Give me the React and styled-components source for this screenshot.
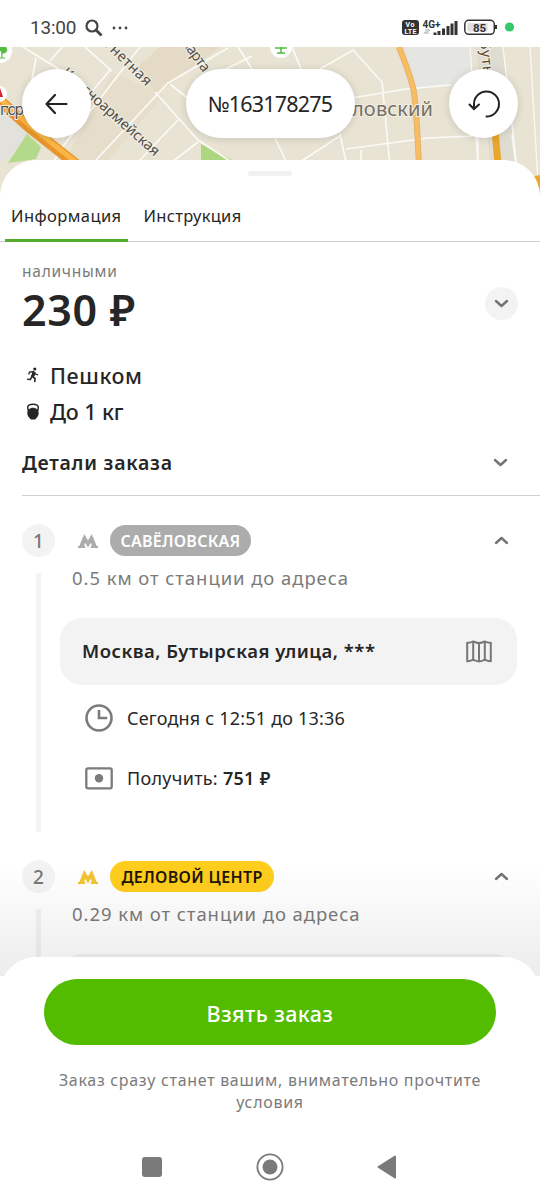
import React from "react";
import styled, { createGlobalStyle } from "styled-components";

const colors = {
  text: "#262626",
  gray: "#7b7b7b",
  light: "#f3f3f3",
  line: "#cfcfcf",
  green: "#53bc00",
  yellow: "#ffcd1c"
};

const GlobalStyle = createGlobalStyle`
  * {
    box-sizing: border-box;
  }
  body {
    margin: 0;
    background: #fff;
    color: ${colors.text};
    font-family: "Noto Sans", "Open Sans", sans-serif;
  }
  svg {
    display: block;
    flex: none;
  }
`;

const Screen = styled.div`
  width: 540px;
  height: 1200px;
  display: flex;
  flex-direction: column;
  overflow: hidden;
  background: #fff;
`;

const StatusBar = styled.div`
  height: 47px;
  flex: none;
  display: flex;
  align-items: center;
  justify-content: space-between;
  padding: 8px 25px 0 30px;
`;

const StatusGroup = styled.div`
  display: flex;
  align-items: center;
  gap: ${props => props.$gap}px;
`;

const Clock = styled.span`
  font-family: Roboto, sans-serif;
  font-size: 19px;
  line-height: 22px;
  letter-spacing: -0.2px;
  color: #444;
`;

const MapArea = styled.div`
  position: relative;
  height: 160px;
  flex: none;
`;

const MapCanvas = styled.svg`
  position: absolute;
  top: 0;
  left: 0;
`;

const MapControls = styled.div`
  position: relative;
  display: flex;
  justify-content: space-between;
  padding: 22px 22px 0;
`;

const RoundButton = styled.button`
  width: 69px;
  height: 69px;
  border: none;
  border-radius: 50%;
  padding: 0;
  background: #fff;
  box-shadow: 0 1px 8px rgba(0, 0, 0, 0.14);
  display: flex;
  align-items: center;
  justify-content: center;
`;

const OrderNumber = styled.div`
  width: 169px;
  height: 69px;
  border-radius: 35px;
  background: #fff;
  box-shadow: 0 1px 8px rgba(0, 0, 0, 0.14);
  line-height: 70px;
  text-align: center;
  white-space: nowrap;
  font-size: 21.5px;
  letter-spacing: -0.8px;
`;

const Sheet = styled.div`
  position: relative;
  height: 816px;
  flex: none;
  margin-top: -47px;
  padding-top: 11px;
  background: #fff;
  border-radius: 36px 36px 0 0;
  overflow: hidden;
`;

const Handle = styled.div`
  width: 44px;
  height: 5px;
  margin: 0 auto;
  border-radius: 3px;
  background: #f1f1f1;
`;

const Tabs = styled.div`
  display: flex;
  height: 52px;
  margin: 14px 0 1px;
  padding-left: 5px;
  gap: 10px;
  box-shadow: inset 0 -1px #d0d0d0;
`;

const Tab = styled.div`
  padding: 0 6px;
  line-height: 52px;
  font-size: 16.5px;
  letter-spacing: ${props => props.$spacing}px;
  box-shadow: ${props => (props.$active ? "inset 0 -3px #55ab2b" : "none")};
`;

const Summary = styled.div`
  display: flex;
  justify-content: space-between;
  align-items: center;
  padding: 18px 22px 0;
`;

const PayType = styled.div`
  line-height: 20px;
  font-size: 15.5px;
  letter-spacing: 0.75px;
  color: ${colors.gray};
`;

const Price = styled.div`
  margin-top: 4px;
  line-height: 50px;
  font-size: 43px;
  font-weight: 600;
  letter-spacing: 0.7px;
`;

const Toggle = styled.div`
  width: 33px;
  height: 33px;
  margin-top: 10px;
  border-radius: 50%;
  background: ${colors.light};
  display: flex;
  align-items: center;
  justify-content: center;
`;

const Traits = styled.div`
  padding: 22px 22px 0 26px;
`;

const Trait = styled.div`
  display: flex;
  align-items: center;
  gap: 10px;
  height: 36px;
  font-size: 21.5px;
  font-weight: 500;
  letter-spacing: ${props => props.$spacing}px;
`;

const Details = styled.div`
  display: flex;
  align-items: center;
  justify-content: space-between;
  height: 67px;
  margin-left: 22px;
  padding-right: 32px;
  border-bottom: 1px solid ${colors.line};
  font-size: 19.5px;
  font-weight: 600;
  letter-spacing: 0.75px;
`;

const Stop = styled.div`
  display: flex;
  height: 308px;
  margin-top: 28px;
  padding: 0 23px 0 22px;
`;

const Rail = styled.div`
  width: 33px;
  flex: none;
  display: flex;
  flex-direction: column;
  align-items: center;
  gap: 16px;
`;

const StopNumber = styled.div`
  width: 33px;
  height: 33px;
  flex: none;
  border-radius: 50%;
  background: ${colors.light};
  line-height: 34px;
  text-align: center;
  font-size: 19px;
  font-weight: 500;
  color: #777;
`;

const RailLine = styled.div`
  width: 5px;
  flex: 1;
  background: ${colors.light};
`;

const StopBody = styled.div`
  flex: 1;
  margin-left: 5px;
`;

const StopHead = styled.div`
  display: flex;
  align-items: center;
  height: 33px;
  padding: 0 8px 0 18px;
`;

const Station = styled.div`
  width: ${props => props.$width}px;
  height: 31px;
  margin: 0 auto 0 12px;
  border-radius: 16px;
  background: ${props => props.$bg};
  color: ${props => props.$fg};
  line-height: 32px;
  text-align: center;
  white-space: nowrap;
  font-size: 16px;
  font-weight: 600;
  letter-spacing: ${props => props.$spacing}px;
`;

const Distance = styled.div`
  margin: 9px 0 0 12px;
  line-height: 24px;
  font-size: 18.5px;
  letter-spacing: 0.93px;
  white-space: nowrap;
  color: ${colors.gray};
`;

const Address = styled.div`
  display: flex;
  align-items: center;
  justify-content: space-between;
  height: 67px;
  margin-top: 28px;
  padding: 0 25px 0 22px;
  border-radius: 22px;
  background: ${colors.light};
  font-size: 18.5px;
  font-weight: 600;
  letter-spacing: 0.5px;
  span {
    margin-top: -3px;
    white-space: nowrap;
  }
`;

const Facts = styled.div`
  padding: 3px 0 0 25px;
`;

const Fact = styled.div`
  display: flex;
  align-items: center;
  gap: 14px;
  height: 60px;
  font-size: 18px;
  letter-spacing: ${props => props.$spacing}px;
  white-space: nowrap;
  b {
    font-weight: 600;
  }
`;

const Fade = styled.div`
  position: absolute;
  left: 0;
  right: 0;
  bottom: 0;
  height: 112px;
  background: linear-gradient(rgba(0, 0, 0, 0), rgba(0, 0, 0, 0.075));
`;

const Footer = styled.div`
  position: relative;
  flex: 1;
  margin-top: -19px;
  padding: 22px 44px 0;
  border-radius: 36px 36px 0 0;
  background: #fff;
`;

const TakeButton = styled.button`
  display: block;
  width: 452px;
  height: 66px;
  border: none;
  border-radius: 33px;
  padding-top: 3px;
  background: ${colors.green};
  color: #fff;
  font-family: inherit;
  font-size: 21.5px;
  font-weight: 500;
  letter-spacing: 0.4px;
`;

const Hint = styled.div`
  margin: 24px -10px 0;
  line-height: 22px;
  text-align: center;
  font-size: 16px;
  letter-spacing: 0.7px;
  color: ${colors.gray};
`;

const SystemNav = styled.div`
  display: flex;
  align-items: center;
  justify-content: space-between;
  height: 28px;
  margin-top: 40px;
  padding: 0 99px 0 98px;
`;

const Chevron = ({ up }) => (
  <svg width="15" height="9" viewBox="0 0 15 9" fill="none">
    <path
      d={up ? "M2 7l5.5-5L13 7" : "M2 2l5.5 5L13 2"}
      stroke="#747474"
      strokeWidth="2.4"
      strokeLinecap="round"
      strokeLinejoin="round"
    />
  </svg>
);

const MetroLogo = ({ color }) => (
  <svg width="20" height="14" viewBox="0 0 20 14">
    <path
      fill={color}
      d="M0 14v-1.900h1.300L6.200 0 10 6.500 13.800 0l4.900 12.100H20V14h-7.200v-1.900h1.100l-1.100-3.300L10 13.600 7.200 8.800l-1.100 3.300h1.100V14z"
    />
  </svg>
);

const RunIcon = () => (
  <svg width="14" height="16" viewBox="0 0 14 16" fill="none" stroke="#262626">
    <circle cx="8.800" cy="2" r="1.600" fill="#262626" stroke="none" />
    <path d="M7.500 5L5.800 9.300l3.300 2.200-.4 3.600M5.600 10l-1.200 2.500-3.200-.3" strokeWidth="1.600" />
    <path d="M2.700 7.500l.8-2.400 4-.6 1.800 2.500 2.700.8" strokeWidth="1.300" />
    <path d="M7.200 5.200L6 9.300l1.700.5 1.500-4.200z" fill="#262626" />
  </svg>
);

const WeightIcon = () => (
  <svg width="14" height="17" viewBox="0 0 14 17">
    <path
      d="M2.300 8L1.700 4.300Q2 1.300 7 1.300t5.300 3L11.700 8"
      fill="none"
      stroke="#262626"
      strokeWidth="1.500"
    />
    <path
      d="M7 4.800c3.500 0 5.700 2.300 5.700 5.200 0 2.200-1 3.800-2.400 5.200-.6.900-1.200 1.300-2 1.300H5.700c-.8 0-1.400-.4-2-1.300C2.300 13.800 1.300 12.200 1.300 10c0-2.900 2.200-5.200 5.700-5.200z"
      fill="#262626"
    />
  </svg>
);

const MapIcon = () => (
  <svg width="26" height="23" viewBox="0 0 26 23" fill="none" stroke="#777" strokeWidth="2">
    <path
      d="M1.200 2.800C3.500 3.200 5 2.300 7.200 1.400 9 2 11 3.100 13 3.100s4-1.100 5.800-1.700c2.200.9 3.700 1.800 6 1.400v18.400c-2.300.3-3.800-.8-6-1.500-1.800.7-3.800 1.700-5.800 1.700s-4-1-5.800-1.700c-2.200.7-3.700 1.800-6 1.500z"
      strokeLinejoin="round"
    />
    <path d="M7.200 1.400v18.300M13 3v18.300M18.800 1.400v18.300" />
  </svg>
);

const ClockIcon = () => (
  <svg width="28" height="28" viewBox="0 0 28 28" fill="none" stroke="#7b7b7b" strokeWidth="2.600">
    <circle cx="14" cy="14" r="12.500" />
    <path d="M14 6v8h8.200" />
  </svg>
);

const CashIcon = () => (
  <svg width="28" height="23" viewBox="0 0 28 23">
    <rect x="1.300" y="1.300" width="25.400" height="20" rx="1.500" fill="none" stroke="#7b7b7b" strokeWidth="2.300" />
    <circle cx="14" cy="11.300" r="4.200" fill="#7b7b7b" />
  </svg>
);

const CityMap = () => (
  <MapCanvas width="540" height="160" viewBox="0 47 540 160">
    <rect y="47" width="540" height="160" fill="#e8e3d3" />
    <path d="M160 47h60l-63 47-22-25z" fill="#e4dac6" />
    <path d="M112 72L63 165h41l60-70z" fill="#e5dcc8" opacity=".7" />
    <path d="M404 47h67v38l-56 3z" fill="#e5e6e2" />
    <path d="M0 100l34 30-28 30H0z" fill="#e3e1dc" />
    <path d="M27 134l14 13-5 12-28 4z" fill="#b3d98a" />
    <path d="M201 144l33 17h-33z" fill="#add681" />
    <path d="M476 47l20 160h26l-18-160z" fill="#dfdcd2" />
    <g fill="none" stroke="#fbfaf6" strokeWidth="1.700">
      <path d="M23 47l47 29M36 58l-4 22M62 47l-12 14M85 47l27 24M155 92l43 48 38 25" />
      <path d="M140 47L64 145l-10 16M96 160l72-77 60-35M138 162l40-42M170 84l20 16M198 142l-26 20M238 47l18 28M212 76l40-20M110 70l-25 30" />
      <path d="M292 47l10 24M320 69l33-19 29 32 8 84M346 99l60-10 45-4M272 132l14 29M300 162l40-26M340 134l6 28M346 149l82-11 45-2M361 150v14" />
    </g>
    <g fill="none" stroke="#f8f7f2" strokeWidth="1.500">
      <path d="M470 47l8 120M503 47l14 120M530 47l8 135M478 130v40M512 135l5 40" />
    </g>
    <path d="M399 47q12 30 15 45 3 25 5 75" fill="none" stroke="#dfae68" strokeWidth="6" />
    <path d="M399 47q12 30 15 45 3 25 5 75" fill="none" stroke="#f8bd62" strokeWidth="4.500" />
    <path d="M-3 98l32 29 48 38" fill="none" stroke="#e9952d" strokeWidth="11" />
    <path d="M-3 96l32 29 48 38" fill="none" stroke="#f9b646" strokeWidth="5" />
    <path d="M495 130l4 45M536 176l6 16" fill="none" stroke="#e9a62b" strokeWidth="7" />
    <circle cx="0" cy="51" r="12" fill="#fff" />
    <path d="M1 51a4 4 0 1 1 5-3 3 3 0 0 1-2 5H2v5M-2 58h7" fill="#54bc43" stroke="#54bc43" />
    <circle cx="281" cy="47" r="11" fill="#fff" />
    <path d="M275 48h12M281 47v6M277 53h8" fill="none" stroke="#54bc43" strokeWidth="1.500" />
    <circle cx="-1" cy="94" r="8" fill="#fff" />
    <path d="M-3 88h3l3 9h-5z" fill="#d42332" />
    <g
      fontFamily="Noto Sans, sans-serif"
      fontSize="14.500"
      fill="#514f4a"
      stroke="#f1eee4"
      strokeWidth="2"
      paintOrder="stroke"
    >
      <text x="0" y="115" textLength="24" fontSize="15.500">пор</text>
      <text transform="translate(61 74) rotate(41.500)" textLength="125">Красноармейская</text>
      <text transform="translate(98 40) rotate(44)" textLength="67">агнетная</text>
      <text transform="translate(182 44) rotate(54)" textLength="36">карта</text>
      <text transform="translate(480 41) rotate(84)" textLength="46" fill="#5c4426">Бутыр</text>
      <text x="352" y="116" textLength="81" fontSize="20" fill="#777064">
        ловский
      </text>
    </g>
  </MapCanvas>
);

const StatusIcons = () => (
  <svg width="113" height="18" viewBox="0 0 113 18">
    <rect y="1" width="17" height="15" rx="3" fill="#333" />
    <g fontFamily="Roboto, sans-serif" fontWeight="700">
      <text x="3.500" y="8" fontSize="7" fill="#fff" textLength="9">Vo</text>
      <text x="2.500" y="14.500" fontSize="7" fill="#fff" textLength="12">LTE</text>
      <text x="20.500" y="8.500" fontSize="10" fill="#333" textLength="18">4G+</text>
    </g>
    <path d="M24 10v5l-2-2M26 15v-5l2 2" stroke="#aaa" fill="none" />
    <path d="M33 16v-2.500M37 16v-4M41.500 16V9.500M46 16V7M50 16V4.500M54 16V2" stroke="#333" strokeWidth="3" />
    <rect x="62.800" y="1.300" width="29.500" height="14" rx="4" fill="#fff" stroke="#333" strokeWidth="1.500" />
    <rect x="65.500" y="4" width="20" height="8.500" rx="1" fill="#dedede" />
    <path d="M94 6v4" stroke="#333" strokeWidth="2" />
    <text x="71" y="12.500" fontSize="11.500" fontWeight="700" fontFamily="Roboto, sans-serif" fill="#333" textLength="13">
      85
    </text>
    <circle cx="107.500" cy="8" r="4.600" fill="#36c96b" />
  </svg>
);

export default class App extends React.Component {
  render() {
    return (
      <>
        <GlobalStyle />
        <Screen>
          <StatusBar>
            <StatusGroup $gap={9}>
              <Clock>13:00</Clock>
              <svg width="18" height="18" viewBox="0 0 18 18" fill="none" stroke="#444" strokeWidth="2.200">
                <circle cx="7" cy="7" r="5.500" />
                <path d="M11 11l5.500 5.500" strokeWidth="2.800" />
              </svg>
              <svg width="16" height="4" viewBox="0 0 16 4" fill="#444">
                <circle cx="2" cy="2" r="1.400" />
                <circle cx="8" cy="2" r="1.400" />
                <circle cx="14" cy="2" r="1.400" />
              </svg>
            </StatusGroup>
            <StatusIcons />
          </StatusBar>

          <MapArea>
            <CityMap />
            <MapControls>
              <RoundButton>
                <svg width="24" height="22" viewBox="0 0 24 22" fill="none" stroke="#222" strokeWidth="2.200">
                  <path d="M10 2L1.500 11l8.500 9M1.500 11h20" strokeLinecap="round" strokeLinejoin="round" />
                </svg>
              </RoundButton>
              <OrderNumber>№163178275</OrderNumber>
              <RoundButton>
                <svg width="32" height="28" viewBox="0 0 32 28" fill="none" stroke="#222" strokeWidth="2">
                  <path d="M18.500 26.500A12.500 12.500 0 1 0 6 14v4.500" strokeLinecap="round" />
                  <path d="M1.500 14.500L6 19l5-4.500" strokeLinecap="round" />
                </svg>
              </RoundButton>
            </MapControls>
          </MapArea>

          <Sheet>
            <Handle />
            <Tabs>
              <Tab $active $spacing={0.42}>Информация</Tab>
              <Tab $spacing={0.3}>Инструкция</Tab>
            </Tabs>

            <Summary>
              <div>
                <PayType>наличными</PayType>
                <Price>230 ₽</Price>
              </div>
              <Toggle>
                <Chevron />
              </Toggle>
            </Summary>

            <Traits>
              <Trait $spacing={0.6}>
                <RunIcon />
                Пешком
              </Trait>
              <Trait $spacing={-0.1}>
                <WeightIcon />
                До 1 кг
              </Trait>
            </Traits>

            <Details>
              Детали заказа
              <Chevron />
            </Details>

            <Stop>
              <Rail>
                <StopNumber>1</StopNumber>
                <RailLine />
              </Rail>
              <StopBody>
                <StopHead>
                  <MetroLogo color="#acacac" />
                  <Station $width={141} $bg="#acacac" $fg="#fff" $spacing={0.25}>
                    САВЁЛОВСКАЯ
                  </Station>
                  <Chevron up />
                </StopHead>
                <Distance>0.5 км от станции до адреса</Distance>
                <Address>
                  <span>Москва, Бутырская улица, ***</span>
                  <MapIcon />
                </Address>
                <Facts>
                  <Fact $spacing={0.2}>
                    <ClockIcon />
                    Сегодня с 12:51 до 13:36
                  </Fact>
                  <Fact $spacing={0.3}>
                    <CashIcon />
                    <span>
                      Получить: <b>751 ₽</b>
                    </span>
                  </Fact>
                </Facts>
              </StopBody>
            </Stop>

            <Stop>
              <Rail>
                <StopNumber>2</StopNumber>
                <RailLine />
              </Rail>
              <StopBody>
                <StopHead>
                  <MetroLogo color="#f2c230" />
                  <Station $width={164} $bg={colors.yellow} $fg="#1c1607" $spacing={0.35}>
                    ДЕЛОВОЙ ЦЕНТР
                  </Station>
                  <Chevron up />
                </StopHead>
                <Distance>0.29 км от станции до адреса</Distance>
                <Address />
              </StopBody>
            </Stop>
            <Fade />
          </Sheet>

          <Footer>
            <TakeButton>Взять заказ</TakeButton>
            <Hint>
              Заказ сразу станет вашим, внимательно прочтите
              <br />
              условия
            </Hint>
            <SystemNav>
              <svg width="20" height="20" viewBox="0 0 20 20">
                <rect width="20" height="20" rx="3" fill="#7a7a7a" />
              </svg>
              <svg width="28" height="28" viewBox="0 0 28 28">
                <circle cx="14" cy="14" r="12.600" fill="none" stroke="#7a7a7a" strokeWidth="1.800" />
                <circle cx="14" cy="14" r="7.500" fill="#7a7a7a" />
              </svg>
              <svg width="20" height="24" viewBox="0 0 20 24">
                <path d="M1.500 12L18 1.500v21z" fill="#7a7a7a" stroke="#7a7a7a" strokeLinejoin="round" strokeWidth="2" />
              </svg>
            </SystemNav>
          </Footer>
        </Screen>
      </>
    );
  }
}
